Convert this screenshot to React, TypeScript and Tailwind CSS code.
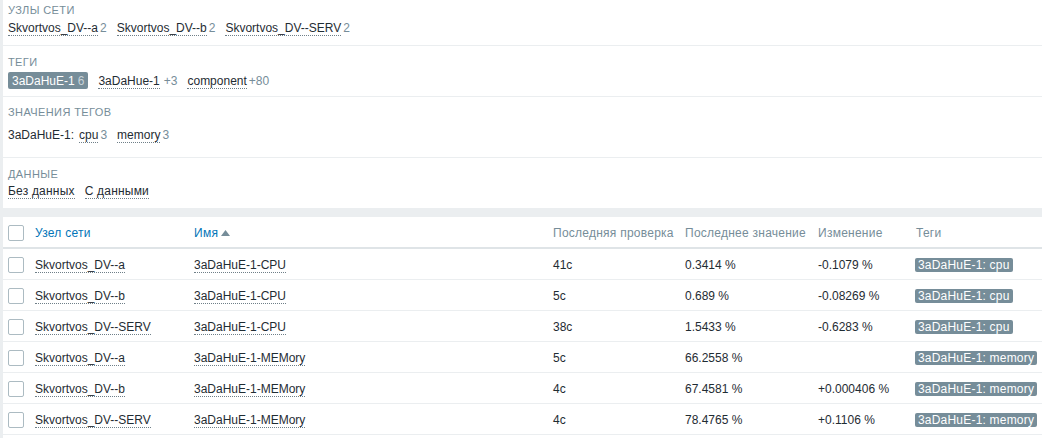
import React from "react";

const F = { fontFamily: '"Liberation Sans", Arial, sans-serif' };

function Lnk({ children, cy }: { children: React.ReactNode; cy?: boolean }) {
  return (
    <span
      className={`border-b border-dotted border-[#6f7f88] leading-[14px] ${cy ? "tracking-[0.2px]" : ""}`}
    >
      {children}
    </span>
  );
}

function Cnt({ children }: { children: React.ReactNode }) {
  return <span className="text-[#768d99] ml-[2px]">{children}</span>;
}

function Label({ children }: { children: React.ReactNode }) {
  return (
    <div className="text-[11px] leading-[14px] tracking-[0.4px] text-[#768d99] uppercase">
      {children}
    </div>
  );
}

function Check() {
  return (
    <span className="block w-[16px] h-[16px] border border-[#acbbc2] rounded-[2px] bg-white" />
  );
}

const rows = [
  ["Skvortvos_DV--a", "3aDaHuE-1-CPU", "41с", "0.3414 %", "-0.1079 %", "3aDaHuE-1: cpu"],
  ["Skvortvos_DV--b", "3aDaHuE-1-CPU", "5с", "0.689 %", "-0.08269 %", "3aDaHuE-1: cpu"],
  ["Skvortvos_DV--SERV", "3aDaHuE-1-CPU", "38с", "1.5433 %", "-0.6283 %", "3aDaHuE-1: cpu"],
  ["Skvortvos_DV--a", "3aDaHuE-1-MEMory", "5с", "66.2558 %", "", "3aDaHuE-1: memory"],
  ["Skvortvos_DV--b", "3aDaHuE-1-MEMory", "4с", "67.4581 %", "+0.000406 %", "3aDaHuE-1: memory"],
  ["Skvortvos_DV--SERV", "3aDaHuE-1-MEMory", "4с", "78.4765 %", "+0.1106 %", "3aDaHuE-1: memory"],
];

const cols = "grid grid-cols-[32px_159px_359px_132px_133px_98px_1fr] items-center";

export default function App() {
  return (
    <div
      style={F}
      className="w-[1042px] h-[438px] bg-[#ebeef0] pl-[3px] text-[12px] text-[#1f2c33] overflow-hidden flex flex-col"
    >
      {/* Filter */}
      <div className="bg-white shrink-0">
        <div className="h-[46px] border-b border-[#ebeef0] pl-[5px] pt-[3px]">
          <Label>Узлы сети</Label>
          <div className="flex gap-[10px] mt-[4px] leading-[14px]">
            <span><Lnk>Skvortvos_DV--a</Lnk><Cnt>2</Cnt></span>
            <span><Lnk>Skvortvos_DV--b</Lnk><Cnt>2</Cnt></span>
            <span><Lnk>Skvortvos_DV--SERV</Lnk><Cnt>2</Cnt></span>
          </div>
        </div>
        <div className="h-[51px] border-b border-[#ebeef0] pl-[5px] pt-[9px]">
          <Label>Теги</Label>
          <div className="flex items-center gap-[10px] mt-[3px] leading-[14px]">
            <span className="bg-[#768d99] text-white rounded-[2px] px-[4px] h-[17px] flex items-center">
              3aDaHuE-1<span className="text-[#c9d3d8] ml-[3px]">6</span>
            </span>
            <span><Lnk>3aDaHue-1</Lnk><span className="text-[#768d99] ml-[4px]">+3</span></span>
            <span><Lnk>component</Lnk><span className="text-[#768d99] ml-[2px]">+80</span></span>
          </div>
        </div>
        <div className="h-[61px] border-b border-[#ebeef0] pl-[5px] pt-[8px]">
          <Label>Значения тегов</Label>
          <div className="flex items-center mt-[9px] leading-[14px]">
            <span className="mr-[5px]">3aDaHuE-1:</span>
            <span className="mr-[10px]"><Lnk>cpu</Lnk><Cnt>3</Cnt></span>
            <span><Lnk>memory</Lnk><Cnt>3</Cnt></span>
          </div>
        </div>
        <div className="h-[50px] pl-[5px] pt-[9px]">
          <Label>Данные</Label>
          <div className="flex gap-[10px] mt-[3px] leading-[14px]">
            <Lnk cy>Без данных</Lnk>
            <Lnk cy>С данными</Lnk>
          </div>
        </div>
      </div>

      {/* Table */}
      <div className="bg-white mt-[9px] flex-1">
        <div className={`${cols} h-[32px] pt-[2px] border-b-2 border-[#dfe4e7] text-[#768d99] tracking-[0.25px]`}>
          <div className="pl-[5px]"><Check /></div>
          <div className="text-[#0275b8]">Узел сети</div>
          <div className="text-[#0275b8] flex items-center">
            Имя
            <svg width="9" height="6" viewBox="0 0 9 6" className="ml-[3px]">
              <path d="M0 6 L4.5 0 L9 6 Z" fill="#768d99" />
            </svg>
          </div>
          <div>Последняя проверка</div>
          <div>Последнее значение</div>
          <div>Изменение</div>
          <div>Теги</div>
        </div>
        {rows.map((r, i) => (
          <div key={i} className={`${cols} h-[31px] pt-[1px] border-b border-[#ebeef0]`}>
            <div className="pl-[5px]"><Check /></div>
            <div><Lnk>{r[0]}</Lnk></div>
            <div><Lnk>{r[1]}</Lnk></div>
            <div>{r[2]}</div>
            <div>{r[3]}</div>
            <div>{r[4]}</div>
            <div className="-ml-[1px]">
              <span className="inline-block bg-[#768d99] text-white rounded-[2px] px-[3px] leading-[14px] tracking-[0.2px]">
                {r[5]}
              </span>
            </div>
          </div>
        ))}
      </div>
    </div>
  );
}
